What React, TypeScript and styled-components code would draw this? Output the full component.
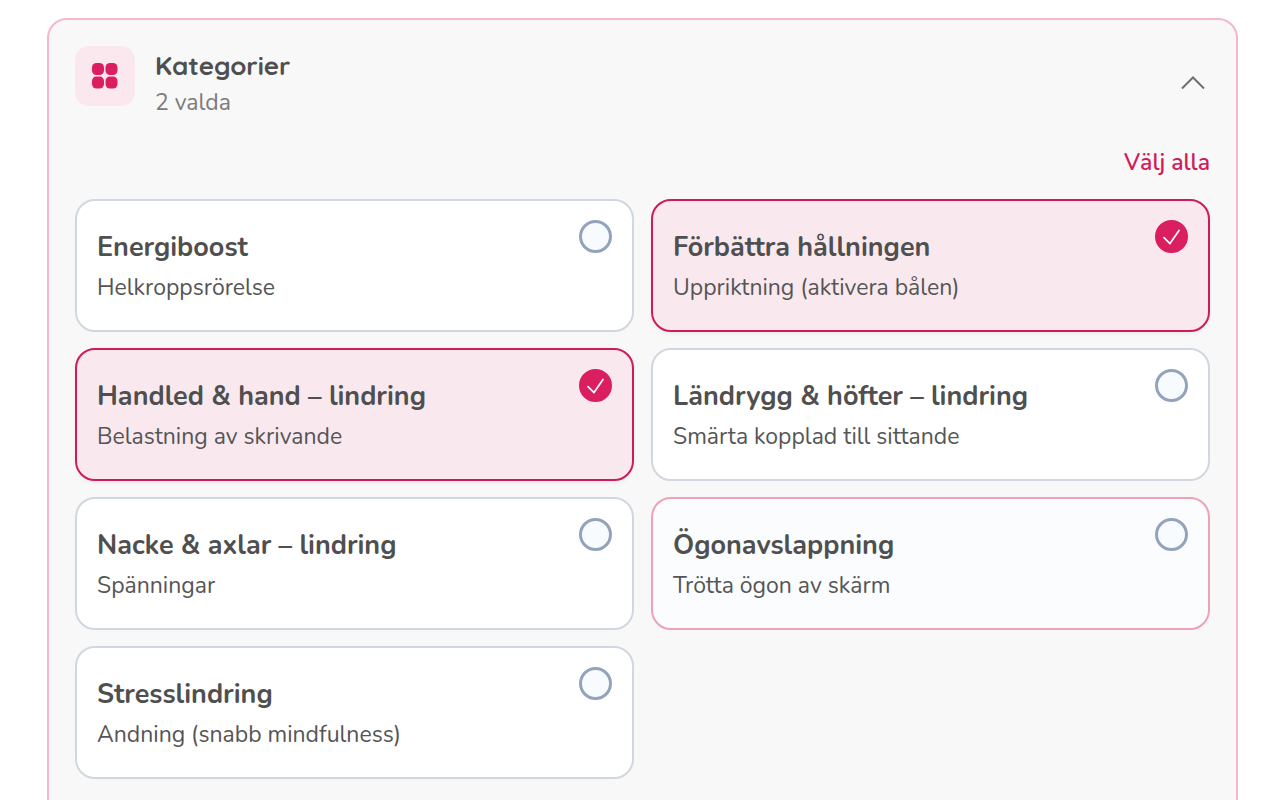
import { useState } from "react";
import styled, { createGlobalStyle } from "styled-components";

const GlobalStyle = createGlobalStyle`
  *, *::before, *::after { box-sizing: border-box; }
  body {
    margin: 0;
    background: #ffffff;
    color: #4f4f4f;
    font-family: Nunito, Lato, "Open Sans", sans-serif;
    -webkit-font-smoothing: antialiased;
  }
  button { font: inherit; }
`;

const Page = styled.main`
  padding: 18px 42px 32px 47px;
`;

const Panel = styled.section`
  padding: 26px 26px 48px;
  border: 2px solid #f5b8ca;
  border-radius: 20px;
  background: #f8f8f8;
`;

const Header = styled.header`
  display: flex;
  align-items: flex-start;
  gap: 20px;
`;

const IconTile = styled.span`
  display: flex;
  align-items: center;
  justify-content: center;
  width: 60px;
  height: 60px;
  border-radius: 14px;
  background: #fae8ee;
`;

const Heading = styled.div`
  flex: 1;
  padding-top: 2px;
`;

const Title = styled.h2`
  margin: 0 0 2px;
  font-family: Quicksand, Nunito, Lato, sans-serif;
  font-size: 26px;
  font-weight: 700;
  line-height: 36px;
`;

const Count = styled.p`
  margin: 0;
  font-size: 23px;
  line-height: 34px;
  color: #7b7b7b;
`;

const Toggle = styled.button`
  display: flex;
  align-items: center;
  justify-content: center;
  width: 34px;
  height: 34px;
  margin-top: 20px;
  padding: 0;
  border: 0;
  background: none;
  color: #6f6f6f;
  cursor: pointer;
`;

const Actions = styled.div`
  display: flex;
  justify-content: flex-end;
  padding: 26px 0 19px;
`;

const SelectAll = styled.button`
  padding: 0;
  border: 0;
  background: none;
  color: #d01c58;
  font-size: 23px;
  font-weight: 600;
  line-height: 34px;
  cursor: pointer;
`;

const Grid = styled.div`
  display: grid;
  grid-template-columns: repeat(2, minmax(0, 1fr));
  gap: 16px 17px;
`;

const tones = {
  plain: { border: "#d1d7df", background: "#ffffff" },
  active: { border: "#eea1b7", background: "#fafcfd" },
  selected: { border: "#cd1c58", background: "#f9e9ef" },
};

const Card = styled.label<{ $tone: keyof typeof tones }>`
  display: flex;
  align-items: flex-start;
  justify-content: space-between;
  gap: 16px;
  min-height: 133px;
  padding: 19px 20px;
  border: 2px solid ${(p) => tones[p.$tone].border};
  border-radius: 20px;
  background: ${(p) => tones[p.$tone].background};
  box-shadow: ${(p) => (p.$tone === "selected" ? "0 2px 4px rgba(0, 0, 0, 0.05)" : "none")};
  cursor: pointer;
`;

const CardText = styled.span`
  display: flex;
  flex-direction: column;
  gap: 8px;
  padding-top: 12px;
`;

const CardTitle = styled.span`
  font-size: 27px;
  font-weight: 700;
  line-height: 32px;
`;

const CardNote = styled.span`
  font-size: 23px;
  line-height: 32px;
  color: #555555;
`;

const Tick = styled.span`
  display: grid;
  place-items: center;
  flex: none;

  & > * { grid-area: 1 / 1; }
  & > svg { pointer-events: none; }
`;

const Checkbox = styled.input`
  appearance: none;
  width: 33px;
  height: 33px;
  margin: 0;
  border: 3px solid #93a3bb;
  border-radius: 50%;
  background: #f8fbfe;
  cursor: pointer;

  &:checked {
    border-color: #da1e5f;
    background: #da1e5f;
  }
`;

const categories = [
  { title: "Energiboost", note: "Helkroppsrörelse" },
  { title: "Förbättra hållningen", note: "Uppriktning (aktivera bålen)" },
  { title: "Handled & hand – lindring", note: "Belastning av skrivande" },
  { title: "Ländrygg & höfter – lindring", note: "Smärta kopplad till sittande" },
  { title: "Nacke & axlar – lindring", note: "Spänningar" },
  { title: "Ögonavslappning", note: "Trötta ögon av skärm", active: true },
  { title: "Stresslindring", note: "Andning (snabb mindfulness)" },
];

export default function App() {
  const [open, setOpen] = useState(true);
  const [selected, setSelected] = useState([1, 2]);

  const toggle = (index: number) =>
    setSelected((now) =>
      now.includes(index) ? now.filter((i) => i !== index) : [...now, index],
    );

  return (
    <>
      <GlobalStyle />
      <Page>
        <Panel>
          <Header>
            <IconTile>
              <svg width="26" height="26" viewBox="0 0 26 26" fill="#da1e5f" aria-hidden="true">
                <rect x="0" y="0" width="12" height="12" rx="4.5" />
                <rect x="13.5" y="0" width="12" height="12" rx="4.5" />
                <rect x="0" y="13.5" width="12" height="12" rx="4.5" />
                <rect x="13.5" y="13.5" width="12" height="12" rx="4.5" />
              </svg>
            </IconTile>
            <Heading>
              <Title>Kategorier</Title>
              <Count>{selected.length} valda</Count>
            </Heading>
            <Toggle
              type="button"
              aria-label="Kategorier"
              aria-expanded={open}
              onClick={() => setOpen(!open)}
            >
              <svg width="26" height="14" viewBox="0 0 26 14" fill="none" stroke="currentColor" strokeWidth="2" aria-hidden="true">
                <path d={open ? "M2 12.5 13 1.5l11 11" : "M2 1.5l11 11 11-11"} />
              </svg>
            </Toggle>
          </Header>
          {open && (
            <>
              <Actions>
                <SelectAll type="button" onClick={() => setSelected(categories.map((_, i) => i))}>
                  Välj alla
                </SelectAll>
              </Actions>
              <Grid>
                {categories.map((item, index) => {
                  const checked = selected.includes(index);
                  return (
                    <Card
                      key={item.title}
                      $tone={checked ? "selected" : item.active ? "active" : "plain"}
                    >
                      <CardText>
                        <CardTitle>{item.title}</CardTitle>
                        <CardNote>{item.note}</CardNote>
                      </CardText>
                      <Tick>
                        <Checkbox type="checkbox" checked={checked} onChange={() => toggle(index)} />
                        {checked && (
                          <svg width="17" height="16" viewBox="0 0 17 16" fill="none" stroke="#ffffff" strokeWidth="1.7" strokeLinecap="round" strokeLinejoin="round" aria-hidden="true">
                            <path d="M1 8.6 7 14.6 16 1.4" />
                          </svg>
                        )}
                      </Tick>
                    </Card>
                  );
                })}
              </Grid>
            </>
          )}
        </Panel>
      </Page>
    </>
  );
}
